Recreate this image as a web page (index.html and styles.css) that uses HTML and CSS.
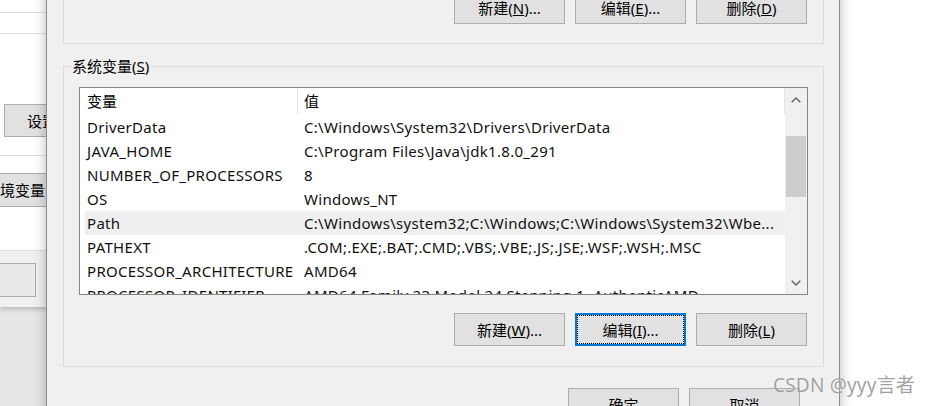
FILE: index.html
```html
<!DOCTYPE html>
<html lang="zh-CN">
<head>
<meta charset="utf-8">
<title>环境变量</title>
<link rel="stylesheet" href="styles.css">
</head>
<body>
<div class="scene">
  <div class="backwin">
    <div class="bw-panel">
      <div class="bw-line bw-l1"></div>
      <div class="bw-line bw-l2"></div>
      <div class="bw-sec bw-sec1"><button class="btn bw-btn-set">设置</button></div>
      <div class="bw-sec bw-sec2"><button class="btn bw-btn-env">环境变量</button></div>
      <div class="bw-foot"><button class="btn bw-btn-ok">确定</button></div>
    </div>
  </div>

  <div class="dialog">
    <div class="group group-user">
      <div class="btn-row">
        <button class="btn">新建(<u>N</u>)...</button>
        <button class="btn">编辑(<u>E</u>)...</button>
        <button class="btn">删除(<u>D</u>)</button>
      </div>
    </div>

    <fieldset class="group group-sys">
      <legend>系统变量(<u>S</u>)</legend>
      <div class="list">
        <div class="list-main">
          <div class="list-head">
            <div class="h1">变量</div>
            <div class="h2">值</div>
          </div>
          <div class="row"><span class="c1">DriverData</span><span class="c2">C:\Windows\System32\Drivers\DriverData</span></div>
          <div class="row"><span class="c1">JAVA_HOME</span><span class="c2">C:\Program Files\Java\jdk1.8.0_291</span></div>
          <div class="row"><span class="c1">NUMBER_OF_PROCESSORS</span><span class="c2">8</span></div>
          <div class="row"><span class="c1">OS</span><span class="c2">Windows_NT</span></div>
          <div class="row row-sel"><span class="c1">Path</span><span class="c2">C:\Windows\system32;C:\Windows;C:\Windows\System32\Wbe...</span></div>
          <div class="row"><span class="c1">PATHEXT</span><span class="c2">.COM;.EXE;.BAT;.CMD;.VBS;.VBE;.JS;.JSE;.WSF;.WSH;.MSC</span></div>
          <div class="row"><span class="c1">PROCESSOR_ARCHITECTURE</span><span class="c2">AMD64</span></div>
          <div class="row"><span class="c1">PROCESSOR_IDENTIFIER</span><span class="c2">AMD64 Family 23 Model 24 Stepping 1, AuthenticAMD</span></div>
        </div>
        <div class="vscroll">
          <div class="arrow"><svg width="10" height="6" viewBox="0 0 10 6"><polyline points="0.7,5.3 5,1 9.3,5.3" fill="none" stroke="#606060" stroke-width="1.4"/></svg></div>
          <div class="track"><div class="thumb"></div></div>
          <div class="arrow"><svg width="10" height="6" viewBox="0 0 10 6"><polyline points="0.7,0.7 5,5 9.3,0.7" fill="none" stroke="#606060" stroke-width="1.4"/></svg></div>
        </div>
      </div>
      <div class="btn-row btn-row-sys">
        <button class="btn">新建(<u>W</u>)...</button>
        <button class="btn btn-focus">编辑(<u>I</u>)...</button>
        <button class="btn">删除(<u>L</u>)</button>
      </div>
    </fieldset>

    <div class="footer">
      <button class="btn">确定</button>
      <button class="btn">取消</button>
    </div>
  </div>

  <div class="watermark">CSDN @yyy言者</div>
</div>
</body>
</html>
```

FILE: styles.css
```css
* {
  box-sizing: border-box;
}

html, body {
  margin: 0;
  padding: 0;
  background: #ffffff;
}

body {
  font-family: "Noto Sans", "Noto Sans CJK SC", sans-serif;
  font-size: 15px;
  color: #000000;
}

.scene {
  position: relative;
  width: 930px;
  height: 406px;
  overflow: hidden;
  background: #ffffff;
}

/* ---------- window behind the dialog ---------- */
.backwin {
  position: absolute;
  left: 0;
  top: 0;
  width: 140px;
  height: 406px;
  background: #e6e6e6;
}

.bw-panel {
  display: flex;
  flex-direction: column;
  height: 307px;
  background: #ffffff;
  box-shadow: 0 2px 5px rgba(0, 0, 0, 0.22);
}

.bw-line {
  border-bottom: 1px solid #dedede;
}

.bw-l1 { height: 13px; }
.bw-l2 { height: 21px; }

.bw-sec {
  border-bottom: 1px solid #dedede;
}

.bw-sec1 {
  height: 122px;
  padding: 70px 0 0 4px;
}

.bw-sec2 {
  height: 95px;
  padding-top: 17px;
}

.bw-foot {
  flex: 1;
  background: #f0f0f0;
  padding-top: 12px;
}

.btn {
  display: flex;
  align-items: center;
  justify-content: center;
  width: 111px;
  height: 33px;
  padding: 0;
  margin: 0;
  border: 1px solid #adadad;
  background: #e1e1e1;
  font-family: inherit;
  font-size: 15px;
  line-height: 20px;
  color: #000000;
  white-space: nowrap;
}

.bw-btn-set {
  width: 76px;
}

.bw-btn-env {
  width: 120px;
  height: 34px;
  margin-left: -45px;
}

.bw-btn-ok {
  width: 137px;
  height: 34px;
  margin-left: -101px;
  background: #e9e9e9;
  color: transparent;
}

/* ---------- dialog ---------- */
.dialog {
  position: absolute;
  left: 46px;
  top: -60px;
  width: 794px;
  height: 520px;
  background: #f0f0f0;
  border: 1px solid #8c8c8c;
  box-shadow: 0 0 12px rgba(0, 0, 0, 0.28);
  padding: 19px 15px 0 16px;
}

.group {
  border: 1px solid #dcdcdc;
}

.group-user {
  padding: 30px 16px 19px 16px;
}

.btn-row {
  display: flex;
  justify-content: flex-end;
  gap: 10px;
}

.group-sys {
  margin: 12px 0 0 0;
  padding: 0 15px 20px 15px;
  min-width: 0;
}

.group-sys legend {
  margin-left: -8px;
  padding: 0 1px;
  font-size: 15px;
  line-height: 20px;
}

.list {
  display: flex;
  height: 208px;
  margin-top: 11px;
  border: 1px solid #858585;
  background: #ffffff;
  overflow: hidden;
}

.list-main {
  flex: 1;
  min-width: 0;
  overflow: hidden;
}

.list-head {
  display: flex;
  height: 27px;
  line-height: 26px;
}

.h1 {
  width: 218px;
  height: 26px;
  padding-left: 7px;
  border-right: 1px solid #e5e5e5;
}

.h2 {
  flex: 1;
  height: 26px;
  padding-left: 6px;
  border-right: 1px solid #e5e5e5;
}

.row {
  display: flex;
  height: 24px;
  line-height: 24px;
  margin-left: 5px;
  white-space: nowrap;
  letter-spacing: 0.3px;
  color: #111111;
}

.row-sel {
  background: #efefef;
}

.c1 {
  flex: none;
  width: 219px;
  padding-left: 2px;
  overflow: hidden;
}

.c2 {
  flex: 1;
  min-width: 0;
  overflow: hidden;
}

.vscroll {
  display: flex;
  flex-direction: column;
  width: 22px;
  background: #f0f0f0;
}

.arrow {
  display: flex;
  align-items: center;
  justify-content: center;
  height: 23px;
}

.arrow svg {
  display: block;
}

.track {
  flex: 1;
}

.thumb {
  height: 61px;
  margin: 25px 1px 0 1px;
  background: #cdcdcd;
}

.btn-row-sys {
  margin-top: 18px;
  padding-right: 1px;
}

.btn-focus {
  border: 2px solid #0078d7;
  outline: 1px dotted #000000;
  outline-offset: -3px;
}

.footer {
  display: flex;
  justify-content: flex-end;
  gap: 10px;
  margin-top: 21px;
  padding-right: 24px;
}

/* ---------- watermark ---------- */
.watermark {
  position: absolute;
  left: 773px;
  top: 375px;
  font-size: 19px;
  line-height: 20px;
  color: rgba(120, 120, 120, 0.7);
  text-shadow: 0 0 1px rgba(255, 255, 255, 0.9);
  white-space: nowrap;
  letter-spacing: 0.2px;
}
```
